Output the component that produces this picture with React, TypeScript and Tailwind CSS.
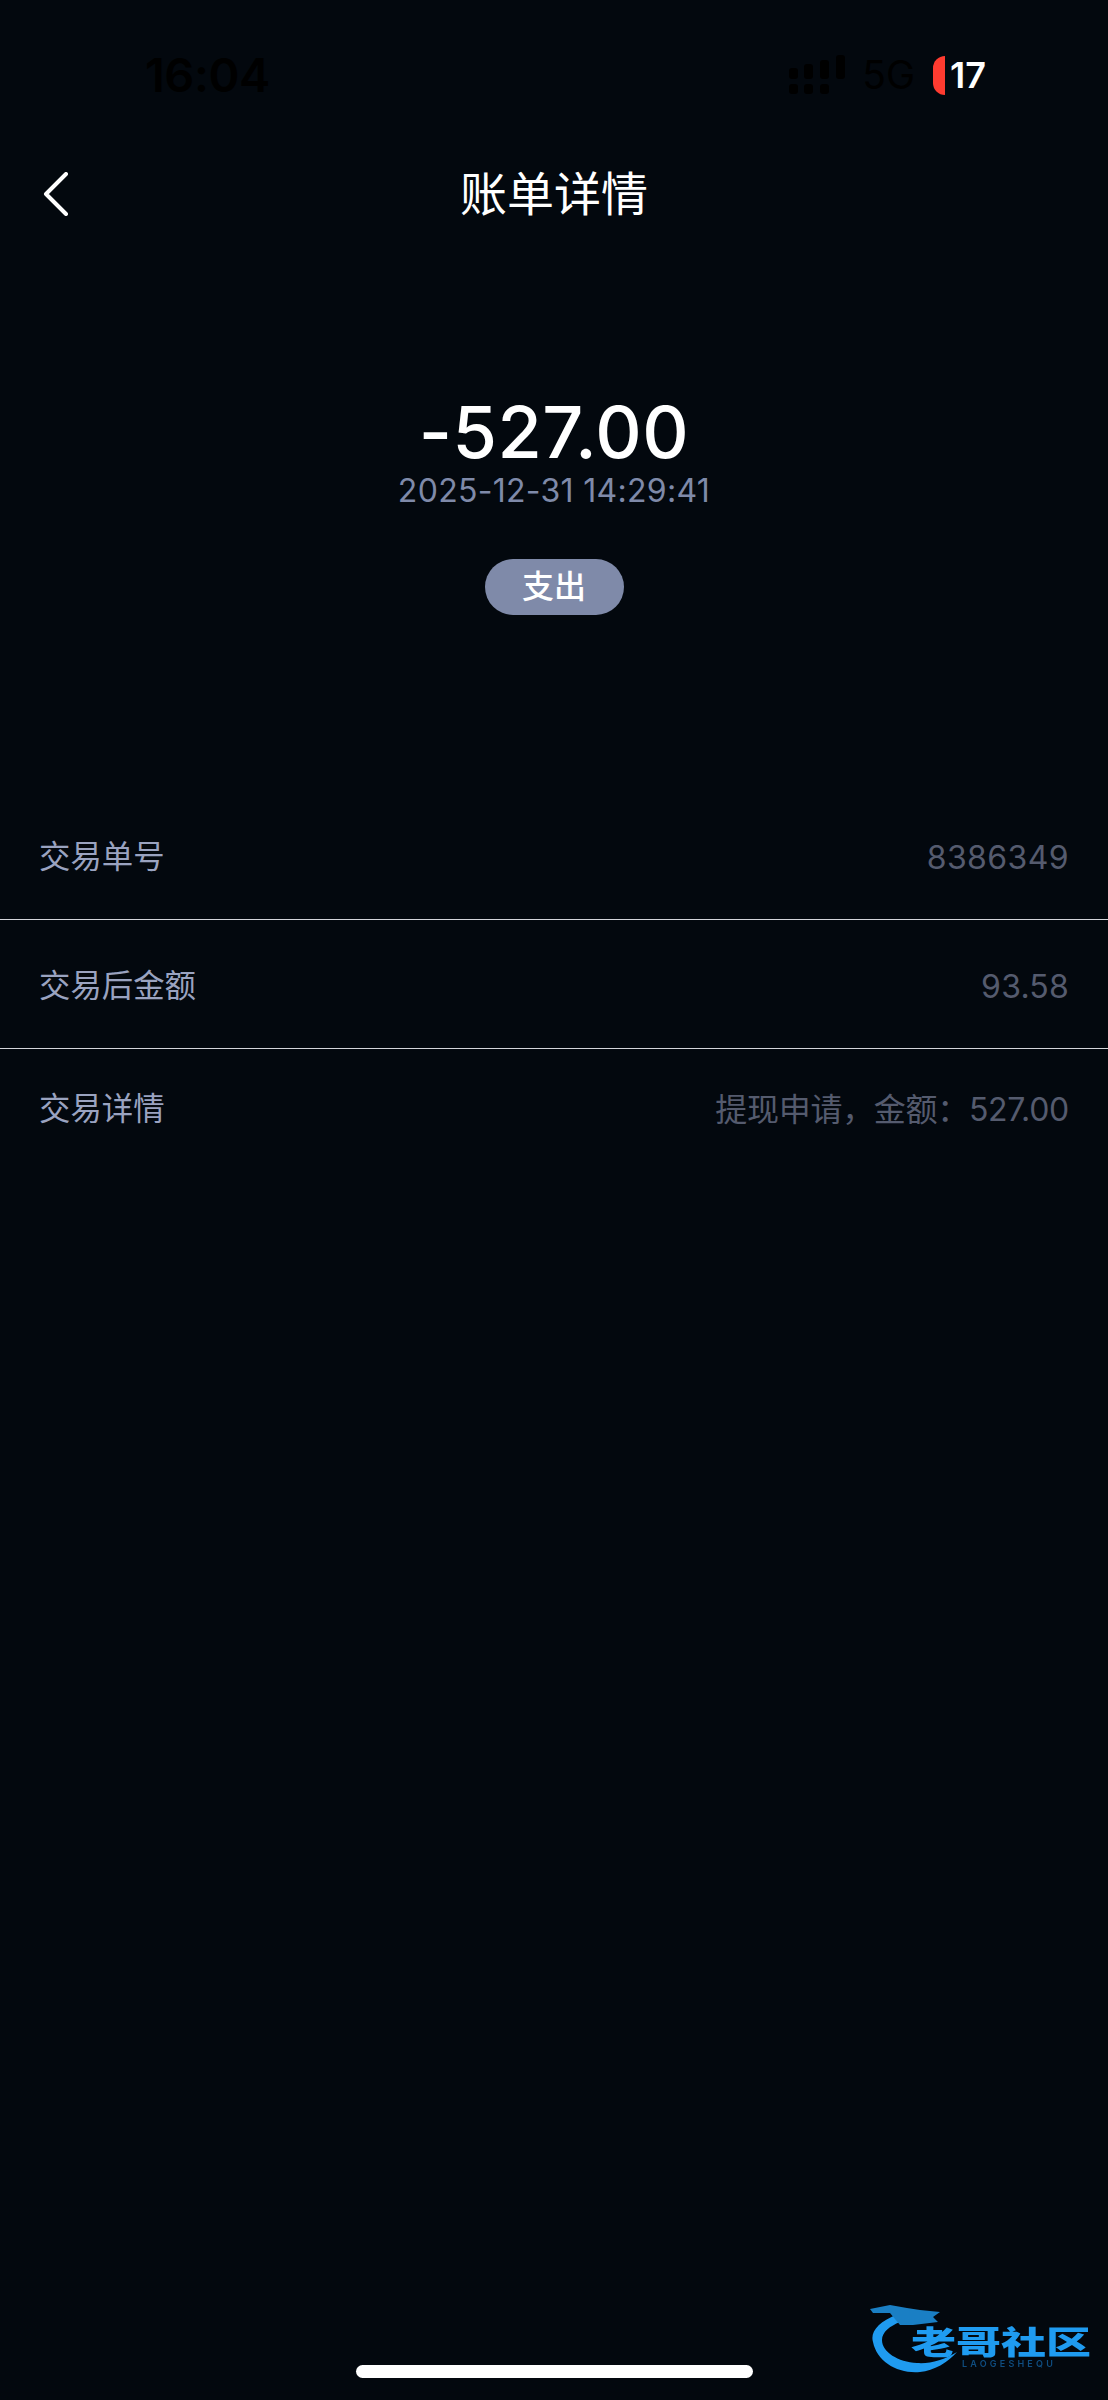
// App.tsx
// Bill detail page, dark theme
import React from 'react';

const rows = [
    { label: '交易单号', value: '8386349', height: 'h-[129px]', border: 'border-[#d4d5da]', tracking: 'tracking-[0.4px]' },
    { label: '交易后金额', value: '93.58', height: 'h-[129px]', border: 'border-[#d4d5da]', tracking: 'tracking-[0.2px]' },
    { label: '交易详情', value: '提现申请，金额：527.00', height: 'h-[118px]', border: 'border-transparent', tracking: 'tracking-[-0.3px]' },
];

const font = "font-['Inter','Noto_Sans_CJK_SC',sans-serif]";

const StatusBar = () => (
    <div className="h-[106px] pl-[145px] pr-[122px] pt-[50px] flex items-start justify-between">
        <span className="text-[47px] leading-[50px] font-semibold text-black tracking-[-0.5px]">16:04</span>
        <div className="flex items-center h-[50px]">
            {/* signal */}
            <svg width="56" height="40" viewBox="0 0 56 40" fill="#000" className="mr-[17px]">
                <rect x="0" y="13" width="9" height="11" rx="3" />
                <rect x="15" y="9" width="9" height="15" rx="3" />
                <rect x="31" y="5" width="9" height="19" rx="3" />
                <rect x="47" y="0" width="9" height="24" rx="3" />
                <rect x="0" y="29" width="9" height="10" rx="3" />
                <rect x="15" y="29" width="9" height="10" rx="3" />
                <rect x="31" y="29" width="9" height="10" rx="3" />
            </svg>
            <span className="text-[39px] leading-[50px] text-black mr-[18px]">5G</span>
            <div className="w-[12px] h-[39px] bg-[#ff3b30] rounded-l-[12px] mr-[5px]"></div>
            <span className="text-[36px] leading-[50px] font-semibold text-white">17</span>
        </div>
    </div>
);

const Header = () => (
    <div className="relative h-[70px] mt-[52px] flex items-center justify-center">
        <svg width="26" height="44" viewBox="0 0 26 44" fill="none" className="absolute left-[43px] top-[14px]">
            <path d="M23 2 L3 22 L23 42" stroke="#fff" strokeWidth="4" strokeLinecap="round" strokeLinejoin="round" />
        </svg>
        <span className="text-[47px] leading-[70px] pt-[2px] text-white">账单详情</span>
    </div>
);

const Logo = () => (
    <div className="absolute left-[868px] top-[2300px] w-[224px] h-[76px] blur-[0.7px]">
        <svg width="100" height="76" viewBox="0 0 100 76" fill="none" className="absolute left-0 top-0">
            <path d="M30 14 C10 22 2 32 5 42 C9 62 30 74 52 72 C66 71 80 62 89 52 C76 60 62 64 49 63 C30 62 14 52 14 40 C14 32 22 26 32 22 Z" fill="#1f9bf0" />
            <path d="M2 9 L22 5 L39 8 L52 10 L72 12 L65 17 L70 22 L45 25 L32 25 L22 13 L5 13 Z" fill="#1a7fc4" />
        </svg>
        <span className="absolute left-[43px] top-[20px] text-[45px] leading-[44px] font-black text-[#1f9bf0] whitespace-nowrap scale-y-[0.72] origin-center">老哥社区</span>
        <span className="absolute left-[94px] top-[60px] text-[9px] leading-[8px] font-semibold tracking-[3.2px] text-[#0f4d80] whitespace-nowrap">LAOGESHEQU</span>
    </div>
);

export default function App() {
    return (
        <div className={`relative h-[2400px] w-full bg-[#03080e] flex flex-col overflow-hidden ${font}`}>
            <StatusBar />
            <Header />

            {/* Amount */}
            <div className="mt-[166px] flex flex-col items-center">
                <div className="text-[72px] leading-[76px] tracking-[0.5px] font-medium text-white">-527.00</div>
                <div className="text-[32px] leading-[40px] tracking-[0.3px] text-[#7f8aa9] mt-[1px]">2025-12-31 14:29:41</div>
                <div className="mt-[48px] w-[139px] h-[56px] rounded-full bg-[#7f8aa9] flex items-center justify-center text-[32px] font-medium text-white">
                    支出
                </div>
            </div>

            {/* Detail rows */}
            <div className="mt-[176px]">
                {rows.map((row) => (
                    <div
                        key={row.label}
                        className={`${row.height} px-[39px] pt-[5px] flex items-center justify-between border-b-[1.5px] ${row.border}`}
                    >
                        <span className="text-[31.4px] text-[#9aa3c0]">{row.label}</span>
                        <span className={`text-[32px] text-[#555b6e] ${row.tracking}`}>{row.value}</span>
                    </div>
                ))}
            </div>

            <div className="flex-1"></div>
            <Logo />

            {/* Home indicator */}
            <div className="mb-[22px] mx-auto w-[397px] h-[13px] rounded-full bg-white"></div>
        </div>
    );
}
